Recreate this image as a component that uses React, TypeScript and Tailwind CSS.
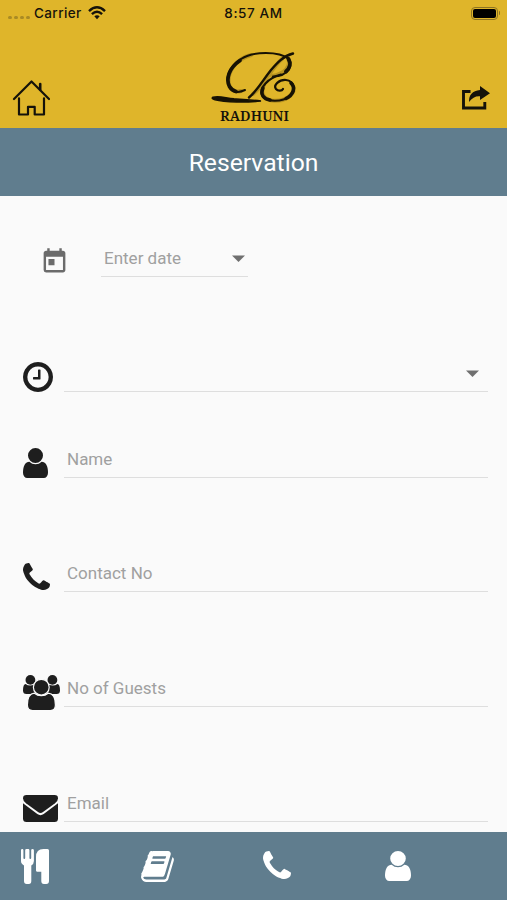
import React from "react";
import { MdToday } from "react-icons/md";

const ROBOTO = "font-['Roboto',sans-serif]";

function UserIcon({ className }: { className: string }) {
  return (
    <svg className={className} viewBox="256 128 1280 1536" preserveAspectRatio="none" fill="currentColor">
      <path d="M1536 1399q0 109-62.5 187t-150.5 78h-854q-88 0-150.5-78t-62.5-187q0-85 8.5-160.5t31.5-152 58.5-131 94-89 134.5-34.5q131 128 313 128t313-128q76 0 134.5 34.5t94 89 58.5 131 31.5 152 8.5 160.5zm-256-887q0 159-112.5 271.5t-271.5 112.5-271.5-112.5-112.5-271.5 112.5-271.5 271.5-112.5 271.5 112.5 112.5 271.5z" />
    </svg>
  );
}

function PhoneIcon({ className }: { className: string }) {
  return (
    <svg className={className} viewBox="192 128 1408 1408" fill="currentColor">
      <path d="M1600 1240q0 27-10 70.5t-21 68.5q-21 50-122 106-94 51-186 51-27 0-53-3.5t-57.5-12.5-47-14.5-55.5-20.5-49-18q-98-35-175-83-127-79-264-216t-216-264q-48-77-83-175-3-9-18-49t-20.5-55.5-14.5-47-12.5-57.5-3.5-53q0-92 51-186 56-101 106-122 25-11 68.5-21t70.5-10q14 0 21 3 18 6 53 76 11 19 30 54t35 63.5 31 53.5q3 4 17.5 25t21.5 35.5 7 28.5q0 20-28.5 50t-62 55-62 53-28.5 46q0 9 5 22.5t8.5 20.5 14 24 11.5 19q76 137 174 235t235 174q2 1 19 11.5t24 14 20.5 8.5 22.5 5q18 0 46-28.5t53-62 55-62 50-28.5q14 0 28.5 7t35.5 21.5 25 17.5q25 15 53.5 31t63.5 35 54 30q70 35 76 53 3 7 3 21z" />
    </svg>
  );
}

function ClockIcon({ className }: { className: string }) {
  return (
    <svg className={className} viewBox="128 128 1536 1536" fill="currentColor">
      <path d="M1024 544v448q0 14-9 23t-23 9h-320q-14 0-23-9t-9-23v-64q0-14 9-23t23-9h224v-352q0-14 9-23t23-9h64q14 0 23 9t9 23zm416 352q0-148-73-273t-198-198-273-73-273 73-198 198-73 273 73 273 198 198 273 73 273-73 198-198 73-273zm224 0q0 209-103 385.5t-279.5 279.5-385.5 103-385.5-103-279.5-279.5-103-385.5 103-385.5 279.5-279.5 385.5-103 385.5 103 279.5 279.5 103 385.5z" />
    </svg>
  );
}

function BookIcon({ className }: { className: string }) {
  return (
    <svg className={className} viewBox="60 128 1674 1536" preserveAspectRatio="none" fill="currentColor">
      <path d="M1703 478q40 57 18 129l-275 906q-19 64-76.5 107.5t-122.5 43.5h-923q-77 0-148.5-53.5t-99.5-131.5q-24-67-2-127 0-4 3-27t4-37q1-8-3-21.5t-3-19.5q2-11 8-21t16.5-23.5 16.5-23.5q23-38 45-91.5t30-91.5q3-10 .5-30t-.5-28q3-11 17-28t17-23q21-36 42-92t25-90q1-9-2.5-32t.5-28q4-13 22-30.5t22-22.5q19-26 42.5-84.5t27.5-96.5q1-8-3-25.5t-2-26.5q2-8 9-18t18-23 17-21q8-12 16.5-30.5t15-35 16-36 19.5-32 26.5-23.5 36-11.5 47.5 5.5l-1 3q38-9 51-9h761q74 0 114 56t18 130l-274 906q-36 119-71.5 153.5t-128.5 34.5h-869q-27 0-38 15-11 16-1 43 24 70 144 70h923q29 0 56-15.5t35-41.5l300-987q7-22 5-57 38 15 59 43zm-1064 2q-4 13 2 22.5t20 9.5h608q13 0 25.5-9.5t16.5-22.5l21-64q4-13-2-22.5t-20-9.5h-608q-13 0-25.5 9.5t-16.5 22.5zm-83 256q-4 13 2 22.5t20 9.5h608q13 0 25.5-9.5t16.5-22.5l21-64q4-13-2-22.5t-20-9.5h-608q-13 0-25.5 9.5t-16.5 22.5z" />
    </svg>
  );
}

function GuestsIcon({ className }: { className: string }) {
  return (
    <svg className={className} viewBox="0 0 37 35" fill="currentColor">
      <circle cx="7.4" cy="4.9" r="4.9" />
      <circle cx="29.4" cy="4.9" r="4.9" />
      <path d="M2.6 9Q4.6 10.6 7.2 10.6 9.2 10.6 11 9.8L14 19H3.5Q0 19 0 15.500 0 9.4 2.6 9ZM34.4 9Q32.4 10.6 29.8 10.6 27.8 10.6 26 9.8L23 19H33.500Q37 19 37 15.500 37 9.4 34.4 9Z" />
      <g stroke="#fafafa" strokeWidth="1.2">
        <path d="M11.500 18.2Q14.2 20.7 18.3 20.7T25.1 18.2Q32.4 18.6 32.4 30 32.4 35.500 27.4 35.500H9.500Q4.4 35.500 4.4 30 4.4 18.6 11.500 18.2Z" />
        <circle cx="18.3" cy="12.2" r="7.900" />
      </g>
    </svg>
  );
}

function EnvelopeIcon({ className }: { className: string }) {
  return (
    <svg className={className} viewBox="0 0 35 27" fill="currentColor">
      <path d="M3.500 0H31.500Q35 0 35 3.2 35 6 32 8.3L20 17Q17.500 18.800 15 17L3 8.3Q0 6 0 3.2 0 0 3.500 0Z" />
      <path d="M0 8.300 14.300 19Q17.500 21.300 20.700 19L35 8.300V23.500Q35 27 31.500 27H3.500Q0 27 0 23.500Z" />
    </svg>
  );
}

function CutleryIcon({ className }: { className: string }) {
  return (
    <svg className={className} viewBox="0 0 28 35" fill="currentColor">
      <path d="M0 1.3Q0 0 1.2 0T2.4 1.3V9Q2.4 10 3.3 10T4.2 9V1.3Q4.2 0 5.5 0H7.2Q8.4 0 8.4 1.3V9Q8.4 10 9.3 10T10.2 9V1.3Q10.2 0 11.5 0T12.9 1.3V12Q12.9 15 10.3 16.4V32Q10.3 35 7.8 35H5.7Q3 35 3 32V16.4Q0 15 0 12Z" />
      <path d="M22.5 0H26.5Q28 0 28 1.5V32Q28 35 25.2 35H23Q20.3 35 20.3 32V22.7H16Q15 22.7 15 21.6V8Q15 0 22.5 0Z" />
    </svg>
  );
}

function HomeIcon({ className }: { className: string }) {
  return (
    <svg className={className} viewBox="0 0 38 36" fill="none" stroke="currentColor" strokeWidth="2.2" strokeLinecap="round" strokeLinejoin="round">
      <path d="M2 19 19.500 1.5 37 19" />
      <path d="M28.2 9.5V4" strokeWidth="2.6" />
      <path d="M7 18.3V34.5H16V26.8H22.700V34.5H32V18.3" />
    </svg>
  );
}

function ShareIcon({ className }: { className: string }) {
  return (
    <svg className={className} viewBox="0 0 28 24" fill="currentColor">
      <path d="M8.5 5.500H1.500V22H22.800V16" fill="none" stroke="currentColor" strokeWidth="2.900" />
      <path d="M18 0 28 7.2 18 14V10.300Q11.8 9.6 7 16 6.500 5.3 18 4Z" />
    </svg>
  );
}

function WifiIcon({ className }: { className: string }) {
  return (
    <svg className={className} viewBox="0 0 18 14" fill="none" stroke="currentColor" strokeWidth="2.4">
      <path d="M1 5.1Q9-2.4 17 5.1" />
      <path d="M3.9 8.2Q9 3.5 14.1 8.2" />
      <path d="M6.3 10.3Q9 8 11.7 10.3L9 13.2Z" fill="currentColor" stroke="none" />
    </svg>
  );
}

function LogoMark({ className }: { className: string }) {
  return (
    <svg className={className} viewBox="0 0 86 54" fill="none" stroke="#171204" strokeLinecap="round">
      <g stroke="#6c5410" strokeOpacity=".35" strokeWidth="4">
        <path d="M71 7C61 15 54 32 42 42M40 3C25 7 17 19 17.500 30C18 37 23 41 30 39M77 6C81 15 73 22 61 24M53 33C49 40 52 47 61 48.500C74 50 83 43 83 36" />
      </g>
      <path d="M82 1.500C72 4 66 11 60 18C52 28 46 39 38 45.500" strokeWidth="2.400" />
      <path d="M78 7C68-1 42-1 30 7C19 14 14 25 18 34C21 41 28 41 34 38" strokeWidth="2" />
      <path d="M29 8.500C18 16 14.500 27 18.500 34.500Q21 38.500 25 39.500" strokeWidth="3.700" />
      <path d="M76 5C84 13 77 24 62 24.500" strokeWidth="2" />
      <path d="M77.500 7C80 11 79 16 75 19.500" strokeWidth="3.900" />
      <path d="M70 22.500C57 26 48 36 51 43C55 51 72 50 79 44C86 38 83 29 75 28C68 27.500 62 33 65 37C67 39.500 71 39 72 37" strokeWidth="2.200" />
      <path d="M52 36C49 43 53 47 59 48M80 31C85 36 82 43 75 46.500" strokeWidth="3.500" />
      <path d="M2 45.300C8 43.500 14 46 23 46.900C32 47.500 40 48 50 49C36 50.500 14 50.500 4 47.800Q0 46.500 2 45.300Z" fill="#171204" strokeWidth="1.600" />
    </svg>
  );
}

function Caret() {
  return (
    <svg className="h-[7px] w-[13px] shrink-0" viewBox="0 0 13 7" fill="#6f6f6f">
      <path d="M0 .5H13L6.500 7Z" />
    </svg>
  );
}

interface FieldProps {
  icon: React.ReactNode;
  label?: string;
  caret?: boolean;
  className: string;
}

function Field({ icon, label, caret, className }: FieldProps) {
  return (
    <div className={`flex shrink-0 items-end pl-[23px] pr-[19px] ${className}`}>
      <div className="flex h-full w-[41px] shrink-0 items-center">{icon}</div>
      <div className="flex h-full flex-1 items-start justify-between border-b-[1.500px] border-[#dedede] pl-[3px] pr-[9px]">
        <span className="mt-[9.500px] text-[17px] leading-5 text-[#a0a0a0]">{label}</span>
        {caret && <span className="mt-[18px] flex"><Caret /></span>}
      </div>
    </div>
  );
}

export default function App() {
  return (
    <div className={`flex h-[900px] w-[507px] flex-col overflow-hidden bg-[#fafafa] ${ROBOTO}`}>
      <header className="flex h-32 shrink-0 flex-col bg-[#dfb52a] text-[#15120a]">
        <div className="grid h-[26px] shrink-0 grid-cols-3 items-center font-['Inter',sans-serif] text-[13.500px] font-medium">
          <div className="flex items-center pl-2">
            <span className="mt-[9px] flex gap-[2.500px]">
              {[0, 1, 2, 3].map((dot) => (
                <i key={dot} className="size-[3.500px] rounded-full bg-[#a98b25]" />
              ))}
            </span>
            <span className="ml-[4.500px] tracking-[0.4px]">Carrier</span>
            <WifiIcon className="ml-[6px] h-[14px] w-[18px]" />
          </div>
          <span className="text-center tracking-[0.6px]">8:57 AM</span>
          <div className="flex items-center justify-end pr-[7px]">
            <span className="flex h-[13px] w-[27px] rounded-[4px] border border-[#8d7423] p-[1px]">
              <span className="flex-1 rounded-[2px] bg-black" />
            </span>
            <span className="ml-px h-1 w-[1.500px] rounded-r bg-[#8d7423]" />
          </div>
        </div>
        <div className="flex flex-1 items-start justify-between pl-[12px] pr-[17px]">
          <HomeIcon className="mt-[54px] h-[36px] w-[38px]" />
          <div className="mt-[26px] ml-[-5px] flex w-[86px] flex-col items-center">
            <LogoMark className="h-[54px] w-[86px]" />
            <span className="mt-[2px] ml-[2px] font-['Noto_Serif','Liberation_Serif',serif] text-[14px] leading-[15px] font-semibold tracking-[0.1px]">RADHUNI</span>
          </div>
          <ShareIcon className="mt-[60px] h-[24px] w-[28px]" />
        </div>
      </header>
      <h1 className="flex h-[68px] shrink-0 items-center justify-center bg-[#607d8e] pt-px text-[24.700px] font-normal text-white">
        Reservation
      </h1>
      <main className="flex flex-1 flex-col overflow-hidden text-[#1e1e1e]">
        <div className="mt-[44px] flex h-[37px] shrink-0 pl-[40px]">
          <MdToday className="mt-[7px] size-[29px] text-[#6b6b6b]" />
          <div className="ml-[32px] flex w-[147px] items-start justify-between border-b-[1.500px] border-[#dedede] pl-[3px] pr-[3px]">
            <span className="mt-[8px] text-[17px] leading-5 text-[#a0a0a0]">Enter date</span>
            <span className="mt-[15px] flex"><Caret /></span>
          </div>
        </div>
        <Field className="mt-[75px] h-[40px]" caret icon={<ClockIcon className="mt-[10px] size-[30px]" />} />
        <Field className="mt-[47px] h-[39px]" label="Name" icon={<UserIcon className="mt-[8px] h-[30px] w-[25px]" />} />
        <Field className="mt-[75px] h-[39px]" label="Contact No" icon={<PhoneIcon className="mt-[8px] size-[27px]" />} />
        <Field className="mt-[76px] h-[39px]" label="No of Guests" icon={<GuestsIcon className="mt-[10px] h-[35px] w-[37px]" />} />
        <Field className="mt-[76px] h-[39px]" label="Email" icon={<EnvelopeIcon className="mt-[12px] h-[27px] w-[35px]" />} />
      </main>
      <nav className="flex h-[68px] shrink-0 items-center bg-[#607d8e] pl-[21px] text-white">
        <a className="w-[120px]"><CutleryIcon className="h-[35px] w-[28px]" /></a>
        <a className="w-[122px]"><BookIcon className="h-[31px] w-[33px]" /></a>
        <a className="w-[122px]"><PhoneIcon className="mb-[2px] size-[28px]" /></a>
        <a><UserIcon className="h-[30px] w-[26px]" /></a>
      </nav>
    </div>
  );
}
